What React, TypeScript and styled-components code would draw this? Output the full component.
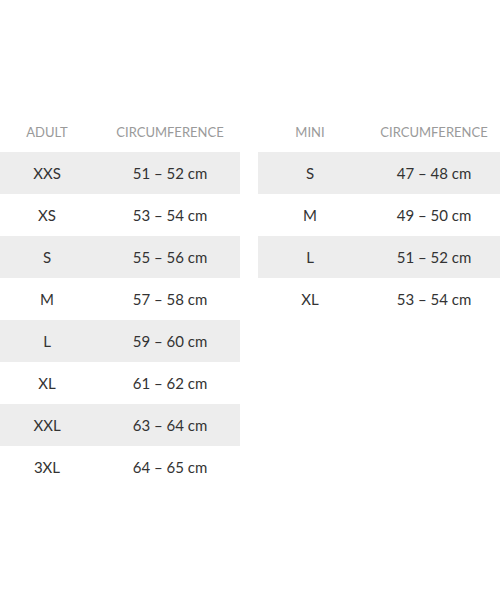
import React from 'react';
import styled, {createGlobalStyle} from 'styled-components';

const GlobalStyle = createGlobalStyle`
  html, body {
    margin: 0;
    padding: 0;
    background: #fff;
  }
  body {
    font-family: Lato, 'Open Sans', sans-serif;
  }
`;

type SizeRow = {size: string; range: string};

const adult: SizeRow[] = [
  {size: 'XXS', range: '51 – 52 cm'},
  {size: 'XS', range: '53 – 54 cm'},
  {size: 'S', range: '55 – 56 cm'},
  {size: 'M', range: '57 – 58 cm'},
  {size: 'L', range: '59 – 60 cm'},
  {size: 'XL', range: '61 – 62 cm'},
  {size: 'XXL', range: '63 – 64 cm'},
  {size: '3XL', range: '64 – 65 cm'},
];

const mini: SizeRow[] = [
  {size: 'S', range: '47 – 48 cm'},
  {size: 'M', range: '49 – 50 cm'},
  {size: 'L', range: '51 – 52 cm'},
  {size: 'XL', range: '53 – 54 cm'},
];

function SizeTable(props: {title: string; rows: SizeRow[]; first: number; width: number}): JSX.Element {
  const cols = `${props.first}px ${props.width - props.first}px`;
  return (
    <Table style={{gridTemplateColumns: cols, width: props.width}}>
      <Head>{props.title}</Head>
      <Head $indent>Circumference</Head>
      {props.rows.map((r, i) => (
        <React.Fragment key={r.size}>
          <Cell $shaded={i % 2 === 0}>{r.size}</Cell>
          <Cell $shaded={i % 2 === 0} $indent>
            {r.range}
          </Cell>
        </React.Fragment>
      ))}
    </Table>
  );
}

export default function App(): JSX.Element {
  return (
    <Page>
      <GlobalStyle />
      <SizeTable title="Adult" rows={adult} first={94} width={240} />
      <SizeTable title="Mini" rows={mini} first={104} width={242} />
    </Page>
  );
}

const Page = styled.div`
  display: flex;
  align-items: flex-start;
  gap: 18px;
  padding-top: 112px;
  width: 500px;
`;

const Table = styled.div`
  display: grid;
  grid-auto-rows: 42px;
  grid-template-rows: 40px;
`;

const Head = styled.div<{$indent?: boolean}>`
  display: flex;
  align-items: center;
  justify-content: center;
  padding-left: ${p => (p.$indent ? '6px' : '0')};
  font-size: 13px;
  text-transform: uppercase;
  color: #9a9a9a;
`;

const Cell = styled.div<{$shaded: boolean; $indent?: boolean}>`
  display: flex;
  align-items: center;
  justify-content: center;
  padding-left: ${p => (p.$indent ? '6px' : '0')};
  font-size: 15px;
  color: #333;
  background: ${p => (p.$shaded ? '#ededed' : 'transparent')};
`;
